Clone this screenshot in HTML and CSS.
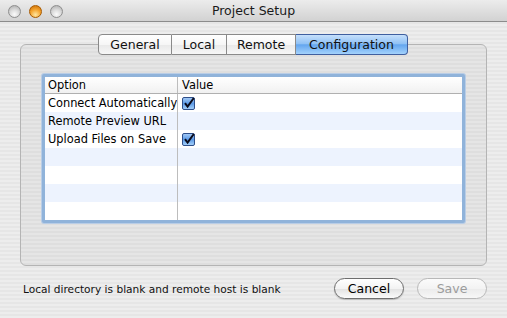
FILE: index.html
```html
<!DOCTYPE html>
<html>
<head>
<meta charset="utf-8">
<link rel="stylesheet" href="styles.css">
</head>
<body>
<div class="window">
  <div class="titlebar">
    <div class="lights">
      <span class="light gray"></span>
      <span class="light orange"></span>
      <span class="light gray"></span>
    </div>
    <div class="title">Project Setup</div>
  </div>
  <div class="content">
    <div class="tabs">
      <div class="tab first">General</div>
      <div class="tab">Local</div>
      <div class="tab">Remote</div>
      <div class="tab selected last">Configuration</div>
    </div>
    <div class="group">
      <div class="table">
        <div class="row head"><div class="c1">Option</div><div class="c2">Value</div></div>
        <div class="row"><div class="c1">Connect Automatically</div><div class="c2"><svg class="cb" viewBox="0 0 13 13" width="13" height="13"><defs><linearGradient id="g1" x1="0" y1="0" x2="0" y2="1"><stop offset="0" stop-color="#a9cdf6"/><stop offset="0.5" stop-color="#5c9ae6"/><stop offset="1" stop-color="#a8d3fb"/></linearGradient></defs><rect x="0.5" y="0.5" width="12" height="12" rx="1.5" fill="url(#g1)" stroke="#2f4f8a"/><path d="M3 6.2 L5.6 9.6 L11.8 1" fill="none" stroke="#0b0b1a" stroke-width="2"/></svg></div></div>
        <div class="row alt"><div class="c1">Remote Preview URL</div><div class="c2"></div></div>
        <div class="row"><div class="c1">Upload Files on Save</div><div class="c2"><svg class="cb" viewBox="0 0 13 13" width="13" height="13"><rect x="0.5" y="0.5" width="12" height="12" rx="1.5" fill="url(#g1)" stroke="#2f4f8a"/><path d="M3 6.2 L5.6 9.6 L11.8 1" fill="none" stroke="#0b0b1a" stroke-width="2"/></svg></div></div>
        <div class="row alt"><div class="c1"></div><div class="c2"></div></div>
        <div class="row"><div class="c1"></div><div class="c2"></div></div>
        <div class="row alt"><div class="c1"></div><div class="c2"></div></div>
        <div class="row"><div class="c1"></div><div class="c2"></div></div>
      </div>
    </div>
    <div class="footer">
      <div class="status">Local directory is blank and remote host is blank</div>
      <div class="btn">Cancel</div>
      <div class="btn disabled">Save</div>
    </div>
  </div>
</div>
</body>
</html>
```
FILE: styles.css
```css
html, body {
  margin: 0;
  padding: 0;
}
* { box-sizing: border-box; }
body {
  width: 507px;
  height: 318px;
  overflow: hidden;
  font-family: "DejaVu Sans", sans-serif;
  color: #000;
}
.window {
  width: 507px;
  height: 318px;
  background: repeating-linear-gradient(to bottom, #ededed 0, #ededed 2px, #e6e6e6 2px, #e6e6e6 4px);
  display: flex;
  flex-direction: column;
}
.titlebar {
  flex-shrink: 0;
  height: 22px;
  border-bottom: 1px solid #8c8c8c;
  background: linear-gradient(to bottom, #ececec, #d2d2d2);
  display: flex;
  align-items: center;
  position: relative;
}
.lights {
  display: flex;
  gap: 8px;
  padding-left: 8px;
  padding-top: 1px;
}
.light {
  width: 13px;
  height: 13px;
  border-radius: 50%;
  border: 1px solid #8e8e8e;
}
.light.gray {
  background: radial-gradient(circle at 50% 75%, #fbfbfb 0, #dcdcdc 45%, #a9a9a9 100%);
}
.light.orange {
  border-color: #a85a00;
  background: radial-gradient(circle at 50% 80%, #ffe7a0 0, #f4a530 50%, #c86a00 100%);
}
.title {
  position: absolute;
  left: 0;
  right: 0;
  top: 3px;
  text-align: center;
  font-size: 12.5px;
  color: #1a1a1a;
  pointer-events: none;
}
.content {
  flex: 1;
  display: flex;
  flex-direction: column;
  padding-top: 12px;
}
.tabs {
  display: flex;
  margin-left: 98px;
  height: 21px;
  margin-bottom: -11px;
  position: relative;
  z-index: 1;
}
.tab {
  height: 21px;
  line-height: 19px;
  font-size: 12.5px;
  text-align: center;
  border: 1px solid #8a8a8a;
  border-left: none;
  background: linear-gradient(to bottom, #ffffff 0, #f6f6f6 50%, #e9e9e9 51%, #f7f7f7 100%);
  color: #111;
}
.tab.first {
  width: 74px;
  border-left: 1px solid #8a8a8a;
  border-radius: 4px 0 0 4px;
}
.tab:nth-child(2) { width: 55px; }
.tab:nth-child(3) { width: 69px; }
.tab.selected {
  width: 112px;
  border-color: #3f5f9f;
  background: linear-gradient(to bottom, #c6e0fb 0, #91c2f5 45%, #64a6ef 52%, #a3d2fc 100%);
}
.tab.last {
  border-radius: 0 4px 4px 0;
}
.group {
  flex-shrink: 0;
  margin: 0 20px;
  height: 222px;
  border: 1px solid #b4b4b4;
  border-radius: 6px;
  background: repeating-linear-gradient(to bottom, #e5e5e5 0, #e5e5e5 2px, #dedede 2px, #dedede 4px);
  padding: 29px 21px 0 21px;
}
.table {
  border: 3px solid #90b3da;
  border-radius: 2px;
  background: #fff;
  box-shadow: 0 0 0 1px #b9cde6;
}
.row {
  display: flex;
  height: 18px;
  font-size: 11.4px;
  line-height: 18px;
}
.row.alt { background: #edf3fe; }
.row.head {
  height: 17px;
  line-height: 16px;
  border-bottom: 1px solid #b0b0b0;
  background: linear-gradient(to bottom, #ffffff, #f1f1f1);
}
.c1 {
  width: 133px;
  padding-left: 3px;
  border-right: 1px solid #bdbdbd;
  white-space: nowrap;
  overflow: hidden;
}
.c2 {
  flex: 1;
  padding-left: 4px;
  display: flex;
  align-items: center;
}
.row.head .c2 { display: block; }
.cb { display: block; }
.footer {
  flex-shrink: 0;
  display: flex;
  align-items: center;
  height: 21px;
  margin-top: 12px;
  padding: 0 20px 0 23px;
}
.status {
  flex: 1;
  font-size: 10.6px;
  color: #111;
}
.btn {
  width: 70px;
  height: 21px;
  line-height: 19px;
  text-align: center;
  font-size: 12.5px;
  border: 1px solid #6e6e6e;
  border-radius: 11px;
  background: linear-gradient(to bottom, #ffffff 0, #f3f3f3 50%, #e4e4e4 55%, #fbfbfb 100%);
  box-shadow: 0 1px 1px rgba(0,0,0,0.2);
}
.btn + .btn { margin-left: 13px; }
.btn.disabled {
  color: #9c9c9c;
  border-color: #b8b8b8;
  box-shadow: none;
  background: linear-gradient(to bottom, #fbfbfb 0, #f3f3f3 50%, #ececec 55%, #f7f7f7 100%);
}
```
